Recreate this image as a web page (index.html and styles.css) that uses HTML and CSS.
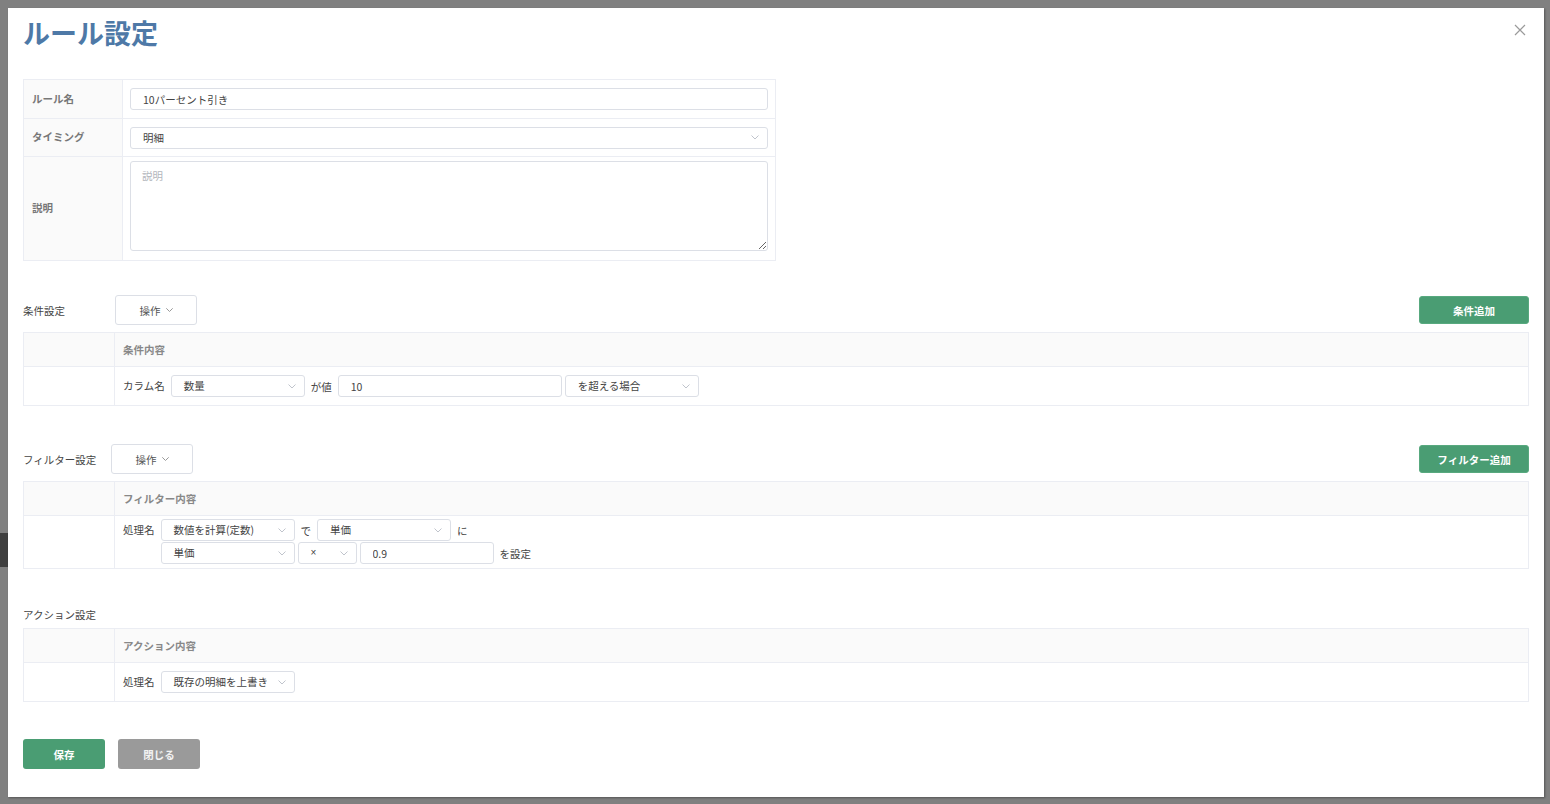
FILE: index.html
```html
<!DOCTYPE html>
<html lang="ja">
<head>
<meta charset="utf-8">
<title>ルール設定</title>
<link rel="stylesheet" href="styles.css">
</head>
<body>
<div class="under"><div class="under-btn"></div></div>

<div class="modal">
  <button class="close" aria-label="閉じる">
    <svg width="12" height="12" viewBox="0 0 12 12"><path d="M1 1L11 11M11 1L1 11" stroke="#9a9a9a" stroke-width="1.2" fill="none"/></svg>
  </button>
  <h1 class="title">ルール設定</h1>

  <div class="ftable">
    <div class="fl">ルール名</div>
    <div class="fc"><input class="inp full" value="10パーセント引き"></div>
    <div class="fl">タイミング</div>
    <div class="fc"><div class="sel full"><span>明細</span><svg class="chev" width="8" height="5" viewBox="0 0 8 5"><path d="M0.5 0.5L4 4L7.5 0.5" fill="none" stroke="#c0c4cc"/></svg></div></div>
    <div class="fl">説明</div>
    <div class="fc top"><textarea class="ta" placeholder="説明"></textarea></div>
  </div>

  <div class="shead c1">
    <span class="slabel">条件設定</span>
    <button class="op">操作<svg width="7" height="4" viewBox="0 0 7 4"><path d="M0.3 0.3L3.5 3.5L6.7 0.3" fill="none" stroke="#999"/></svg></button>
    <button class="add">条件追加</button>
  </div>
  <div class="gtable">
    <div class="gh"></div>
    <div class="gh">条件内容</div>
    <div class="gb"></div>
    <div class="gb">
      <span class="lbl">カラム名</span>
      <div class="sel w134"><span>数量</span><svg class="chev" width="8" height="5" viewBox="0 0 8 5"><path d="M0.5 0.5L4 4L7.5 0.5" fill="none" stroke="#c0c4cc"/></svg></div>
      <span class="conn">が値</span>
      <input class="inp w224" value="10">
      <div class="sel w134 ml3"><span>を超える場合</span><svg class="chev" width="8" height="5" viewBox="0 0 8 5"><path d="M0.5 0.5L4 4L7.5 0.5" fill="none" stroke="#c0c4cc"/></svg></div>
    </div>
  </div>

  <div class="shead c2">
    <span class="slabel">フィルター設定</span>
    <button class="op">操作<svg width="7" height="4" viewBox="0 0 7 4"><path d="M0.3 0.3L3.5 3.5L6.7 0.3" fill="none" stroke="#999"/></svg></button>
    <button class="add">フィルター追加</button>
  </div>
  <div class="gtable">
    <div class="gh"></div>
    <div class="gh">フィルター内容</div>
    <div class="gb tall"></div>
    <div class="gb tall multi">
      <span class="lbl">処理名</span>
      <div class="lines">
        <div class="line">
          <div class="sel w134"><span>数値を計算(定数)</span><svg class="chev" width="8" height="5" viewBox="0 0 8 5"><path d="M0.5 0.5L4 4L7.5 0.5" fill="none" stroke="#c0c4cc"/></svg></div>
          <span class="conn">で</span>
          <div class="sel w134"><span>単価</span><svg class="chev" width="8" height="5" viewBox="0 0 8 5"><path d="M0.5 0.5L4 4L7.5 0.5" fill="none" stroke="#c0c4cc"/></svg></div>
          <span class="conn">に</span>
        </div>
        <div class="line">
          <div class="sel w134"><span>単価</span><svg class="chev" width="8" height="5" viewBox="0 0 8 5"><path d="M0.5 0.5L4 4L7.5 0.5" fill="none" stroke="#c0c4cc"/></svg></div>
          <div class="sel w59 ml3"><span class="times">×</span><svg class="chev" width="8" height="5" viewBox="0 0 8 5"><path d="M0.5 0.5L4 4L7.5 0.5" fill="none" stroke="#c0c4cc"/></svg></div>
          <input class="inp w134 ml3" value="0.9">
          <span class="conn">を設定</span>
        </div>
      </div>
    </div>
  </div>

  <div class="ahead">アクション設定</div>
  <div class="gtable act">
    <div class="gh"></div>
    <div class="gh">アクション内容</div>
    <div class="gb"></div>
    <div class="gb">
      <span class="lbl">処理名</span>
      <div class="sel w134"><span>既存の明細を上書き</span><svg class="chev" width="8" height="5" viewBox="0 0 8 5"><path d="M0.5 0.5L4 4L7.5 0.5" fill="none" stroke="#c0c4cc"/></svg></div>
    </div>
  </div>

  <div class="footer">
    <button class="btn save">保存</button>
    <button class="btn cancel">閉じる</button>
  </div>
</div>
</body>
</html>
```

FILE: styles.css
```css
* { box-sizing: border-box; }
html, body { margin: 0; padding: 0; }
body {
  width: 1550px;
  height: 804px;
  overflow: hidden;
  position: relative;
  background: #808080;
  font-family: "Noto Sans CJK JP", "Noto Sans", sans-serif;
  font-size: 10.5px;
  color: #444;
}

.under { padding-top: 533px; }
.under-btn { width: 40px; height: 34px; background: #3f3f3f; }

.modal {
  position: absolute;
  left: 8px;
  top: 8px;
  width: 1536px;
  height: 789px;
  background: #fff;
  padding: 0 15px;
  box-shadow: 1px 1px 2px rgba(0, 0, 0, 0.35);
}

.close {
  position: absolute;
  top: 16px;
  right: 18px;
  width: 12px;
  height: 12px;
  padding: 0;
  border: 0;
  background: none;
  display: block;
}
.close svg { display: block; }

.title {
  margin: 0;
  padding-top: 7px;
  font-size: 27px;
  line-height: 36px;
  font-weight: 700;
  color: #4e79a7;
}

/* form table */
.ftable {
  margin-top: 28px;
  width: 753px;
  display: grid;
  grid-template-columns: 99px 1fr;
  grid-template-rows: 39px 38px 104px;
  border-top: 1px solid #ebedf3;
  border-left: 1px solid #ebedf3;
}
.fl {
  background: #fafafa;
  border-right: 1px solid #ebedf3;
  border-bottom: 1px solid #ebedf3;
  padding-left: 8px;
  padding-bottom: 2px;
  display: flex;
  align-items: center;
  font-weight: 700;
  color: #777;
}
.fc {
  border-right: 1px solid #ebedf3;
  border-bottom: 1px solid #ebedf3;
  padding: 0 7px;
  display: flex;
  align-items: center;
}
.fc.top { align-items: flex-start; padding-top: 4px; }

.inp {
  height: 22px;
  border: 1px solid #dcdfe6;
  border-radius: 3px;
  padding: 0 12px;
  font: inherit;
  color: #444;
  background: #fff;
  outline: none;
  margin: 0;
}
.sel {
  height: 22px;
  border: 1px solid #dcdfe6;
  border-radius: 3px;
  padding: 0 8px 0 12px;
  display: flex;
  align-items: center;
  justify-content: space-between;
  background: #fff;
  color: #444;
  line-height: 20px;
  white-space: nowrap;
}
.times { font-family: "Liberation Sans", sans-serif; font-size: 10px; }
.chev { display: block; flex: none; }
.full { width: 100%; }
.w134 { width: 134px; }
.w224 { width: 224px; }
.w59 { width: 59px; }
.ml3 { margin-left: 3px; }

.ta {
  display: block;
  width: 100%;
  height: 90px;
  border: 1px solid #dcdfe6;
  border-radius: 3px;
  padding: 6px 11px;
  font: inherit;
  color: #444;
  outline: none;
  margin: 0;
}
.ta::placeholder { color: #b3b6bc; }

/* section heads */
.shead {
  display: flex;
  align-items: center;
  height: 30px;
}
.shead.c1 { margin-top: 34px; }
.shead.c2 { margin-top: 38px; }
.slabel { color: #444; white-space: nowrap; }
.c1 .slabel { width: 92px; }
.c2 .slabel { width: 88px; }

.op {
  width: 82px;
  height: 30px;
  border: 1px solid #dcdfe6;
  border-radius: 3px;
  background: #fff;
  font: inherit;
  color: #555;
  display: flex;
  align-items: center;
  justify-content: center;
  gap: 5px;
  padding: 0;
}
.op svg { display: block; }

.add {
  margin-left: auto;
  width: 110px;
  height: 28px;
  border: 1px solid #58a97f;
  border-radius: 3px;
  background: #4a9d73;
  font: inherit;
  font-weight: 700;
  color: #fff;
  padding: 0;
}

/* grid tables */
.gtable {
  margin-top: 7px;
  display: grid;
  grid-template-columns: 91px 1fr;
  border-top: 1px solid #ebedf3;
  border-left: 1px solid #ebedf3;
}
.gtable.act { margin-top: 5px; }
.gh {
  height: 34px;
  background: #fafafa;
  border-right: 1px solid #ebedf3;
  border-bottom: 1px solid #ebedf3;
  padding-left: 8px;
  display: flex;
  align-items: center;
  font-weight: 700;
  color: #888;
}
.gb {
  height: 39px;
  border-right: 1px solid #ebedf3;
  border-bottom: 1px solid #ebedf3;
  padding-left: 8px;
  display: flex;
  align-items: center;
}
.gb.tall { height: 53px; }
.gb.multi { align-items: flex-start; padding-top: 3px; }
.lbl { margin-right: 6px; line-height: 22px; white-space: nowrap; }
.conn { margin: 0 6px; white-space: nowrap; }
.lines { display: flex; flex-direction: column; gap: 1px; }
.line { display: flex; align-items: center; }

.ahead {
  margin-top: 38px;
  line-height: 16px;
  color: #444;
}

.footer {
  margin-top: 37px;
  display: flex;
  gap: 13px;
}
.btn {
  width: 82px;
  height: 30px;
  border: 0;
  border-radius: 3px;
  font: inherit;
  font-weight: 700;
  color: #fff;
  padding: 0;
}
.save { background: #4a9d73; }
.cancel { background: #9a9a9a; color: #f2f2f2; }
```
